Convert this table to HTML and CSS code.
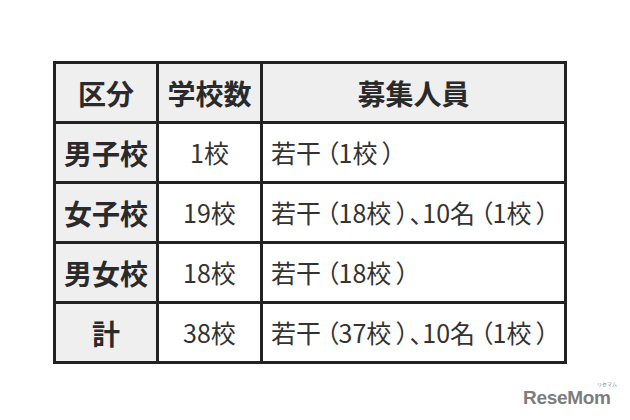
FILE: index.html
```html
<!DOCTYPE html>
<html lang="ja">
<head>
<meta charset="utf-8">
<link rel="stylesheet" href="styles.css">
</head>
<body>
<div class="page">
  <table class="tbl">
    <tr class="head">
      <th class="c1">区分</th>
      <th class="c2">学校数</th>
      <th class="c3">募集人員</th>
    </tr>
    <tr>
      <th>男子校</th>
      <td class="num">1校</td>
      <td class="txt">若干<span class="op">（</span>1校<span class="cp">）</span></td>
    </tr>
    <tr>
      <th>女子校</th>
      <td class="num">19校</td>
      <td class="txt">若干<span class="op">（</span>18校<span class="cp">）</span>、10名<span class="op">（</span>1校<span class="cp">）</span></td>
    </tr>
    <tr>
      <th>男女校</th>
      <td class="num">18校</td>
      <td class="txt">若干<span class="op">（</span>18校<span class="cp">）</span></td>
    </tr>
    <tr>
      <th>計</th>
      <td class="num">38校</td>
      <td class="txt">若干<span class="op">（</span>37校<span class="cp">）</span>、10名<span class="op">（</span>1校<span class="cp">）</span></td>
    </tr>
  </table>
  <div class="logo">
    <span class="kana">リセマム</span>
    <span class="word">ReseMom</span>
  </div>
</div>
</body>
</html>
```
FILE: styles.css
```css
html, body {
  margin: 0;
  padding: 0;
  background: #ffffff;
}
.page {
  position: relative;
  width: 630px;
  height: 420px;
  padding: 61px 0 0 53px;
  box-sizing: border-box;
  font-family: "Noto Sans CJK JP", "Noto Sans", sans-serif;
  color: #2a2a2a;
}
.tbl {
  border-collapse: collapse;
  border: 3px solid #222;
}
.tbl th, .tbl td {
  border: 3px solid #222;
  height: 57px;
  padding: 0;
  font-size: 25px;
  line-height: 1;
}
.tbl th {
  background: #efefef;
  font-weight: 700;
  font-size: 28px;
  text-align: center;
}
.c1 { width: 100px; }
.c2 { width: 101px; }
.c3 { width: 301px; }
.num {
  text-align: center;
  background: #fff;
  color: #333;
}
.txt {
  text-align: left;
  padding-left: 8px !important;
  background: #fff;
  color: #333;
  font-feature-settings: "palt";
  white-space: nowrap;
}
.op {
  margin-left: 5px;
}
.cp {
  margin-left: 5px;
  margin-right: 1px;
}
.logo {
  position: absolute;
  left: 523px;
  top: 386px;
  color: #7d7d7d;
}
.kana {
  position: absolute;
  left: 74px;
  top: -5px;
  font-size: 5px;
  line-height: 1;
  white-space: nowrap;
}
.word {
  display: block;
  font-family: "Liberation Sans", sans-serif;
  font-weight: 700;
  font-size: 19px;
  line-height: 1;
  letter-spacing: -0.3px;
  padding-top: 2px;
}
```
